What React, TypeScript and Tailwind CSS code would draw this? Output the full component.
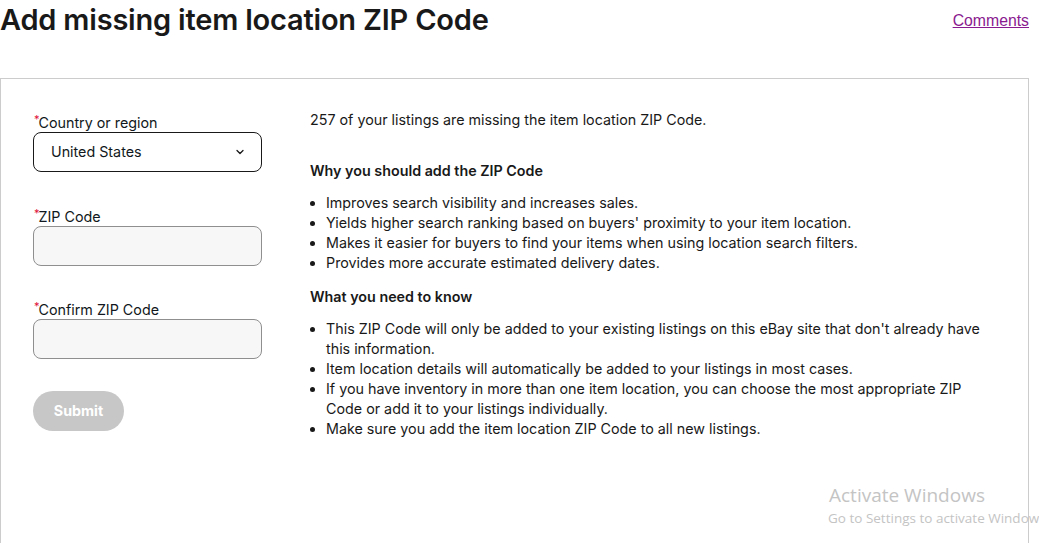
import React from "react";

function Label({ children }: { children: React.ReactNode }) {
  return (
    <div className="flex items-start h-[18px] text-[14.3px] leading-[17px] text-[#111820]">
      <span className="text-[#e0103a] text-[11px] leading-[10px] ml-[1px] -mr-[1px]">*</span>
      <span>{children}</span>
    </div>
  );
}

export default function App() {
  const why = [
    "Improves search visibility and increases sales.",
    "Yields higher search ranking based on buyers' proximity to your item location.",
    "Makes it easier for buyers to find your items when using location search filters.",
    "Provides more accurate estimated delivery dates.",
  ];
  const know = [
    "This ZIP Code will only be added to your existing listings on this eBay site that don't already have this information.",
    "Item location details will automatically be added to your listings in most cases.",
    "If you have inventory in more than one item location, you can choose the most appropriate ZIP Code or add it to your listings individually.",
    "Make sure you add the item location ZIP Code to all new listings.",
  ];
  return (
    <div
      className="relative w-[1039px] h-[543px] overflow-hidden bg-white text-[#111820]"
      style={{ fontFamily: "Inter, 'Noto Sans', sans-serif" }}
    >
      <div className="flex items-start justify-between h-[78px]">
        <h1 className="text-[29px] leading-[40px] font-semibold tracking-[-0.2px] text-[#191919] mt-0">
          Add missing item location ZIP Code
        </h1>
        <a
          href="#"
          className="mr-[10px] mt-[11px] text-[15.8px] leading-[20px] underline text-[#8a1a8f]"
          style={{ fontFamily: "'Liberation Sans', Arial, sans-serif" }}
        >
          Comments
        </a>
      </div>
      <div className="ml-0 w-[1029px] h-[500px] border border-[#cccccc] flex pl-[32px] pt-[35px]">
        <div className="w-[229px] flex flex-col shrink-0">
          <Label>Country or region</Label>
          <div className="h-[40px] border border-[#191919] rounded-[8px] flex items-center justify-between pl-[17px] pr-[15px] text-[14.3px]">
            <span>United States</span>
            <svg width="12" height="12" viewBox="0 0 12 12" fill="none">
              <path d="M3 4.5L6 7.5L9 4.5" stroke="#191919" strokeWidth="1.3" strokeLinecap="round" strokeLinejoin="round" />
            </svg>
          </div>
          <div className="h-[36px]" />
          <Label>ZIP Code</Label>
          <div className="h-[40px] border border-[#8f8f8f] rounded-[8px] bg-[#f7f7f7]" />
          <div className="h-[35px]" />
          <Label>Confirm ZIP Code</Label>
          <div className="h-[40px] border border-[#8f8f8f] rounded-[8px] bg-[#f7f7f7]" />
          <div className="h-[32px]" />
          <button className="w-[91px] h-[40px] rounded-full bg-[#c7c7c7] text-white font-bold text-[14.3px]">
            Submit
          </button>
        </div>
        <div className="ml-[48px] w-[675px] text-[14.3px] leading-[20px] text-[#191919]">
          <p className="-mt-[4px]">257 of your listings are missing the item location ZIP Code.</p>
          <h2 className="font-semibold mt-[31px]">Why you should add the ZIP Code</h2>
          <ul className="mt-[12px] list-disc pl-[16px]">
            {why.map((t) => (
              <li key={t}>{t}</li>
            ))}
          </ul>
          <h2 className="font-semibold mt-[14px]">What you need to know</h2>
          <ul className="mt-[12px] list-disc pl-[16px]">
            {know.map((t) => (
              <li key={t}>{t}</li>
            ))}
          </ul>
        </div>
      </div>
      <div
        className="absolute left-[829px] top-[483px] text-[#c4c4c4] whitespace-nowrap"
        style={{ fontFamily: "'Open Sans', 'Noto Sans', sans-serif" }}
      >
        <div className="text-[19px] leading-[25px]">Activate Windows</div>
        <div className="text-[13.5px] leading-[20px] -ml-[1px]">Go to Settings to activate Windows.</div>
      </div>
    </div>
  );
}
